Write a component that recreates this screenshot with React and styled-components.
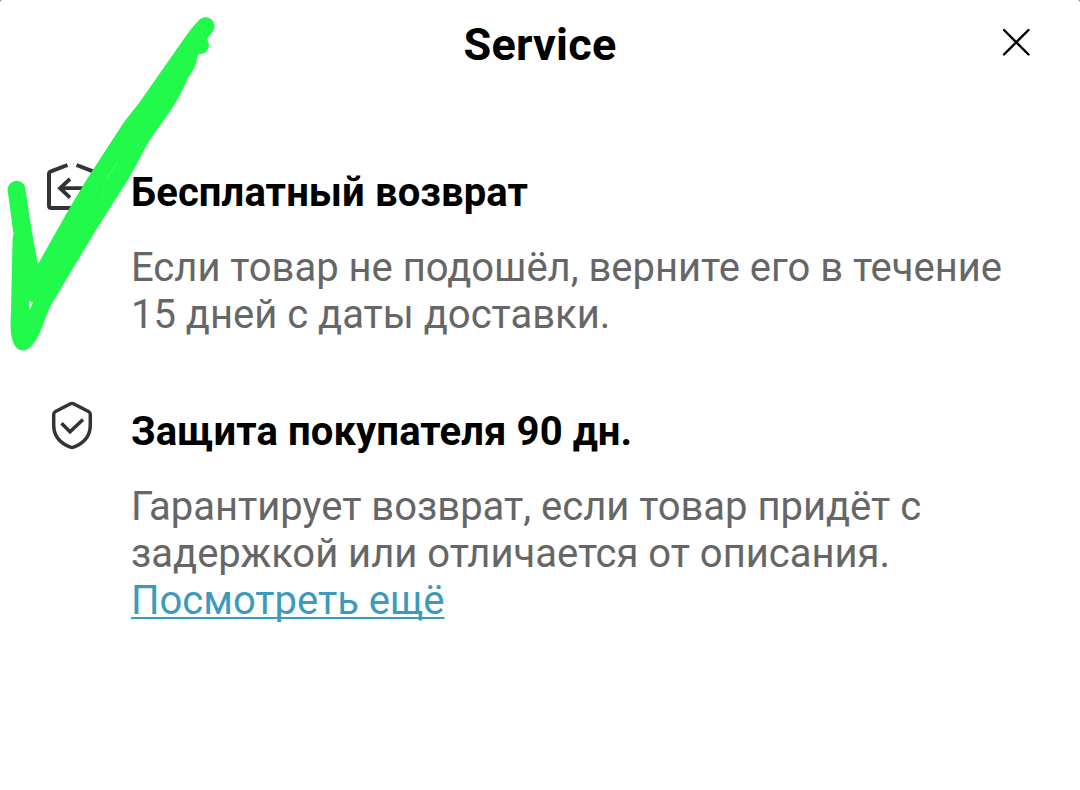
import React from 'react'
import styled, { createGlobalStyle } from 'styled-components'

const GlobalStyle = createGlobalStyle`
  * {
    box-sizing: border-box;
  }
  body {
    margin: 0;
    background: #ffffff;
    font-family: Roboto, sans-serif;
  }
`
const Sheet = styled.div`
  position: relative;
  width: 1080px;
  height: 790px;
  overflow: hidden;
  border-radius: 3px 3px 0 0;
  background: #ffffff;
`
const Backdrop = styled.div`
  background: linear-gradient(#8c8c8c 0 8px, #ffffff 8px);
`
const Header = styled.header`
  display: grid;
  grid-template-columns: 78px 1fr 78px;
  height: 88px;
  padding-top: 18px;
`
const Title = styled.h1`
  grid-column: 2;
  margin: 0;
  text-align: center;
  font-weight: 700;
  font-size: 45px;
  line-height: 54px;
  letter-spacing: 0.25px;
  color: #000000;
`
const CloseButton = styled.button`
  align-self: start;
  margin-top: 10px;
  padding: 0;
  border: 0;
  background: none;
  cursor: pointer;
  svg {
    display: block;
  }
`
const List = styled.main`
  display: flex;
  flex-direction: column;
  gap: 70px;
  padding: 81px 40px 0 47px;
`
const Row = styled.section`
  display: flex;
`
const IconBox = styled.div`
  flex: 0 0 84px;
  margin-top: -8px;
  svg {
    display: block;
    fill: none;
    stroke: #333336;
  }
`
const Content = styled.div`
  flex: 1;
`
const Heading = styled.h2`
  margin: 0 0 28px;
  font-weight: 700;
  font-size: 40px;
  line-height: 47px;
  letter-spacing: 0.11px;
  color: #000000;
`
const Text = styled.p`
  margin: 0;
  font-size: 40px;
  line-height: 47px;
  letter-spacing: -0.015px;
  color: #666666;
  white-space: nowrap;
`
const More = styled.a`
  color: #3c9abb;
  text-decoration: underline;
  text-decoration-thickness: 2px;
  text-underline-offset: 3px;
  text-decoration-skip-ink: none;
`
// hand-drawn tick over the first row
const Mark = styled.svg`
  position: absolute;
  left: 0;
  top: 0;
  pointer-events: none;
`

function ReturnIcon() {
  return (
    <svg width="50" height="52" viewBox="0 0 50 52" strokeWidth="4">
      <path d="M20.5 4 4 10.3Q2 11 2 13V44.5Q2 47 4.5 47H45.5Q48 47 48 44.5V13Q48 11 46 10.3L29.5 4" />
      <path d="M23 18 13 27.2 23 36.7M13.5 27.2H37" strokeWidth="3.8" />
    </svg>
  )
}

function ShieldIcon() {
  return (
    <svg width="50" height="52" viewBox="0 -1 50 52" strokeWidth="3.5">
      <path d="M23.5 2.8Q25 2 26.5 2.8L41.5 10.5Q43.3 11.5 43.3 13.5V24C43.3 34.5 37 42.2 26.5 46.2Q25 46.8 23.5 46.2C13 42.2 6.700 34.5 6.700 24V13.5Q6.700 11.5 8.500 10.5Z" />
      <path d="M14.5 22.3 23 30.7 36 18.5" />
    </svg>
  )
}

export default function App() {
  return (
    <Backdrop>
      <GlobalStyle />
      <Sheet>
        <Header>
          <Title>Service</Title>
          <CloseButton aria-label="Close">
            <svg
              width="28"
              height="28"
              viewBox="0 0 28 28"
              stroke="#000"
              strokeWidth="2.4"
              strokeLinecap="round"
            >
              <path d="M2 2 26.5 26.5M26.5 2 2 26.5" />
            </svg>
          </CloseButton>
        </Header>
        <List>
          <Row>
            <IconBox>
              <ReturnIcon />
            </IconBox>
            <Content>
              <Heading>Бесплатный возврат</Heading>
              <Text>
                Если товар не подошёл, верните его в течение
                <br />
                15 дней с даты доставки.
              </Text>
            </Content>
          </Row>
          <Row>
            <IconBox>
              <ShieldIcon />
            </IconBox>
            <Content>
              <Heading>Защита покупателя 90 дн.</Heading>
              <Text>
                Гарантирует возврат, если товар придёт с
                <br />
                задержкой или отличается от описания.
                <br />
                <More>Посмотреть ещё</More>
              </Text>
            </Content>
          </Row>
        </List>
        <Mark width="240" height="370" viewBox="0 0 240 370">
          <path
            fill="#22fa4b"
            fillRule="evenodd"
            d="M198.500 20.500A9 9 0 0 1 212.500 32L207.500 38.500L207.800 41A8.700 8.700 0 0 1 200 54Q198 54 197 58Q197 65 188 78Q178 101 166 117L149 141L134 169Q129 179 122 189L96 230L51 305C43 322 41 334 34 343Q28 350.500 23 350.500C15 350.500 12 341 11 333Q10 323 11 312L12.600 238L13.500 234L7.600 190A9 9 0 0 1 25 186.500L31.500 230Q33 236 34 243L38 264L69 209L87 179L124 122L139 103L181 43Q188 32 198.500 20.500ZM29 301L33 302.500L29.500 310Z"
          />
          <path d="M118 162Q113 168 106.500 179" fill="none" stroke="#7df595" strokeWidth="0.5" />
          <path d="M101 188 95.500 198.500" fill="none" stroke="#1fd844" strokeWidth="0.5" />
        </Mark>
      </Sheet>
    </Backdrop>
  )
}
